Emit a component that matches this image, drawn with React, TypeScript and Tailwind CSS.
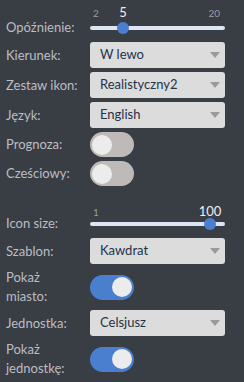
import React from 'react';

// settings panel (dark)
const Slider = ({ min, max, value, pos, numTop = 0 }: { min: string; max: string; value: string; pos: number; numTop?: number }) => (
  <div className="relative w-[135px] h-[32px]">
    <div className="absolute left-0 right-0 h-[14px]" style={{ top: numTop }}>
      <span className="absolute left-[3px] top-[2px] text-[10px] leading-[10px] text-[#9a9ca0]">{min}</span>
      <span className="absolute right-[5px] top-[2px] text-[10px] leading-[10px] text-[#9a9ca0]">{max}</span>
      <span
        className="absolute top-0 -translate-x-1/2 text-[13px] leading-[13px] text-[#eceef2]"
        style={{ left: pos }}
      >
        {value}
      </span>
    </div>
    <div className="absolute left-0 right-0 top-[20px] h-[4px] rounded-full bg-[#dfe4f4]" />
    <div
      className="absolute top-[16px] w-[12px] h-[12px] -translate-x-1/2 rounded-full bg-[#4a7fd0]"
      style={{ left: pos }}
    />
  </div>
);

const Select = ({ value }: { value: string }) => (
  <div className="w-[135px] h-[26px] rounded-[3px] bg-[#dcdcdc] flex items-center justify-between pl-[10px] pr-[5px]">
    <span className="text-[13px] text-[#24324a]">{value}</span>
    <svg width="10" height="6" viewBox="0 0 10 6">
      <path d="M0 0 L10 0 L5 6 Z" fill="#9a9a9a" />
    </svg>
  </div>
);

const Toggle = ({ on }: { on?: boolean }) => (
  <div
    className={
      'w-[44px] h-[25px] rounded-full flex items-center px-[2px] ' +
      (on ? 'bg-[#4a7fd0] justify-end' : 'bg-[#bdbab8] justify-start')
    }
  >
    <div className="w-[20px] h-[20px] rounded-full bg-[#ececec]" />
  </div>
);

const Row = ({ label, children, className = '' }: { label: React.ReactNode; children: React.ReactNode; className?: string }) => (
  <div className={'flex items-center ' + className}>
    <div className="w-[84px] text-[13px] leading-[19px] text-[#bcbec2]">{label}</div>
    {children}
  </div>
);

export default function App() {
  return (
    <div className="w-[244px] h-[382px] bg-[#393d44] pt-[6px] pl-[6px] flex flex-col gap-[4px] font-['Lato',sans-serif]">
      <Row label={<span className="block pb-[1px]">Opóźnienie:</span>} className="!items-end">
        <Slider min="2" max="20" value="5" pos={33} />
      </Row>
      <Row label="Kierunek:">
        <Select value="W lewo" />
      </Row>
      <Row label="Zestaw ikon:">
        <Select value="Realistyczny2" />
      </Row>
      <Row label="Język:">
        <Select value="English" />
      </Row>
      <Row label="Prognoza:">
        <Toggle />
      </Row>
      <Row label="Cześciowy:">
        <Toggle />
      </Row>
      <Row label={<span className="block pb-[1px]">Icon size:</span>} className="mt-[12px] !items-end">
        <Slider min="1" max="" value="100" pos={120} numTop={3} />
      </Row>
      <Row label="Szablon:">
        <Select value="Kawdrat" />
      </Row>
      <Row label={<>Pokaż<br />miasto:</>}>
        <Toggle on />
      </Row>
      <Row label="Jednostka:">
        <Select value="Celsjusz" />
      </Row>
      <Row label={<>Pokaż<br />jednostkę:</>}>
        <Toggle on />
      </Row>
    </div>
  );
}
